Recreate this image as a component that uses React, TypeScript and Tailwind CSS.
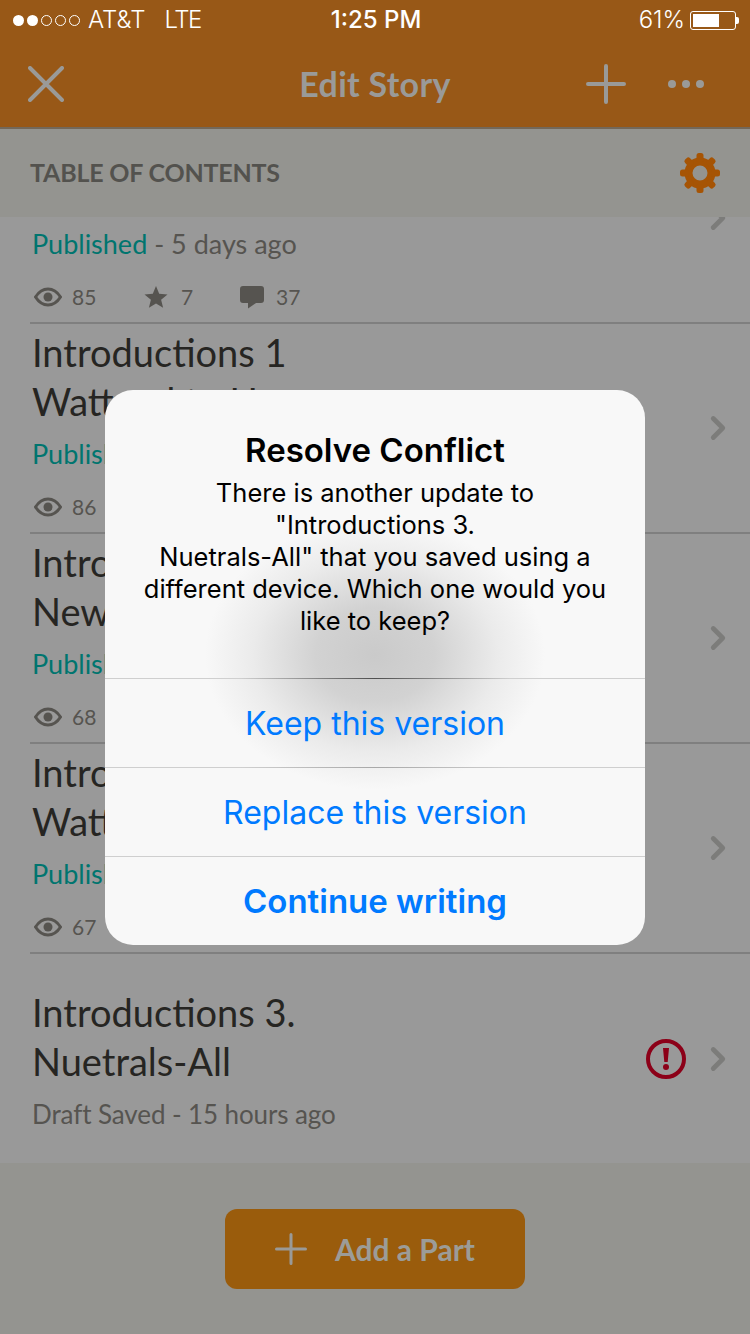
import { ChevronRight } from 'lucide-react';

const ios = { fontFamily: 'Inter, "Liberation Sans", sans-serif' };
const story = { fontFamily: 'Lato, "Noto Sans", sans-serif' };

const rows = [
  { title: ['', ''], views: 85, stars: 7, comments: 37 },
  { title: ['Introductions 1', 'Wattpad to Us'], views: 86, stars: 4, comments: 12 },
  { title: ['Introductions 2', 'New Version'], views: 68, stars: 3, comments: 9 },
  { title: ['Introductions 3', 'Wattpad Version'], views: 67, stars: 5, comments: 8 },
];

function Eye() {
  return (
    <svg width="28" height="20" viewBox="0 0 28 20">
      <path d="M1.5 10C5 4.5 9.2 2 14 2s9 2.5 12.5 8C23 15.500 18.800 18 14 18S5 15.500 1.500 10z" fill="none" stroke="#565450" strokeWidth="3" />
      <circle cx="14" cy="10" r="4.500" fill="#565450" />
    </svg>
  );
}

function Star() {
  return (
    <svg width="24" height="24" viewBox="0 0 24 24">
      <path d="M12 1l3.200 7.800 8.300.6-6.400 5.300 2 8.100L12 18.400 4.900 22.800l2-8.100L.5 9.400l8.300-.6z" fill="#565450" />
    </svg>
  );
}

function Bubble() {
  return (
    <svg width="24" height="24" viewBox="0 0 24 24">
      <path d="M3 1h18a3 3 0 0 1 3 3v11a3 3 0 0 1-3 3h-5l-8 5.500V18H3a3 3 0 0 1-3-3V4a3 3 0 0 1 3-3z" fill="#565450" />
    </svg>
  );
}

function Gear() {
  return (
    <svg width="40" height="40" viewBox="0 0 40 40">
      <circle cx="20" cy="20" r="11.500" fill="none" stroke="#a65404" strokeWidth="8" />
      {[0, 45, 90, 135, 180, 225, 270, 315].map((deg) => (
        <rect key={deg} x="16.500" y="0" width="7" height="9" rx="2.500" fill="#a65404" transform={`rotate(${deg} 20 20)`} />
      ))}
    </svg>
  );
}

function PlusIcon({ size, width }: { size: number; width: number }) {
  return (
    <svg width={size} height={size} viewBox={`0 0 ${size} ${size}`}>
      <path d={`M${size / 2} ${width / 2}V${size - width / 2}M${width / 2} ${size / 2}H${size - width / 2}`} stroke="#9a9a98" strokeWidth={width} strokeLinecap="round" />
    </svg>
  );
}

function Row({ row }: { row: (typeof rows)[number] }) {
  return (
    <div className="h-[210px] ml-[30px] border-b-2 border-[#7f7f7f] pl-[2px] pr-[20px] flex items-center justify-between">
      <div className="flex-1 pt-[4px]">
        <div className="h-[98px] text-[38px] leading-[49px] text-[#262522]">
          <div className="h-[49px]">{row.title[0]}</div>
          <div className="h-[49px]">{row.title[1]}</div>
        </div>
        <div className="mt-[3px] h-[50px] flex items-center text-[27px] text-[#565450]">
          <span className="text-[#00756f]">Published</span>
          <span>&nbsp;- 5 days ago</span>
        </div>
        <div className="ml-[2px] h-[53px] pt-[2px] flex items-center text-[21px] text-[#565450]">
          <div className="w-[110px] flex items-center gap-[10px]">
            <Eye />
            {row.views}
          </div>
          <div className="w-[96px] flex items-center gap-[13px]">
            <Star />
            {row.stars}
          </div>
          <div className="flex items-center gap-[12px]">
            <Bubble />
            {row.comments}
          </div>
        </div>
      </div>
      <ChevronRight size={38} strokeWidth={3} color="#7c7c7a" className="mr-[-7px]" />
    </div>
  );
}

export default function App() {
  return (
    <div className="relative w-[750px] h-[1334px] overflow-hidden bg-[#999999] flex flex-col" style={story}>
      <header className="relative z-10 h-[129px] shrink-0 bg-[#985817] border-b-2 border-[#73685a]">
        <div className="h-[40px] pl-[13px] pr-[11px] flex items-center justify-between text-white text-[24px]" style={ios}>
          <div className="w-[300px] flex items-center">
            <div className="flex gap-[3px]">
              <span className="w-[11px] h-[11px] rounded-full bg-white" />
              <span className="w-[11px] h-[11px] rounded-full bg-white" />
              <span className="w-[11px] h-[11px] rounded-full border border-white" />
              <span className="w-[11px] h-[11px] rounded-full border border-white" />
              <span className="w-[11px] h-[11px] rounded-full border border-white" />
            </div>
            <span className="ml-[8px] font-light">AT&amp;T</span>
            <span className="ml-[19px] font-light tracking-[-1.5px]">LTE</span>
          </div>
          <span className="font-medium">1:25 PM</span>
          <div className="w-[300px] flex items-center justify-end">
            <span className="font-light">61%</span>
            <div className="ml-[5px] w-[46px] h-[19px] rounded-[3px] border border-white p-[2px]">
              <div className="w-[26px] h-full bg-white" />
            </div>
            <div className="w-[3px] h-[7px] bg-white rounded-r-[2px]" />
          </div>
        </div>
        <div className="h-[88px] pl-[28px] pr-[46px] flex items-center justify-between">
          <svg width="36" height="36" viewBox="0 0 36 36">
            <path d="M2 2l32 32M34 2L2 34" stroke="#9a9a98" strokeWidth="4" strokeLinecap="round" />
          </svg>
          <div className="absolute left-0 right-0 pb-[2px] text-center text-[34px] tracking-[0.3px] font-bold text-[#9a9a98]">Edit Story</div>
          <div className="flex items-center gap-[42px]">
            <PlusIcon size={40} width={4} />
            <div className="flex gap-[6px]">
              <span className="w-[8px] h-[8px] rounded-full bg-[#9a9a98]" />
              <span className="w-[8px] h-[8px] rounded-full bg-[#9a9a98]" />
              <span className="w-[8px] h-[8px] rounded-full bg-[#9a9a98]" />
            </div>
          </div>
        </div>
      </header>

      <div className="relative z-10 h-[88px] shrink-0 bg-[#949490] pl-[30px] pr-[30px] flex items-center justify-between">
        <span className="text-[25px] tracking-[-0.2px] font-bold text-[#53524e]">TABLE OF CONTENTS</span>
        <Gear />
      </div>

      <div className="flex-1 overflow-hidden">
        <div className="mt-[-103px]">
          {rows.map((row) => (
            <Row key={row.views} row={row} />
          ))}
        </div>
        <div className="h-[210px] pl-[32px] pr-[20px] flex items-center justify-between">
          <div className="flex-1 pt-[9px]">
            <div className="text-[38px] leading-[49px] text-[#262522]">
              <div>Introductions 3.</div>
              <div>Nuetrals-All</div>
            </div>
            <div className="mt-[3px] h-[50px] flex items-center text-[26px] tracking-[-0.1px] text-[#565450]">Draft Saved - 15 hours ago</div>
          </div>
          <svg width="40" height="40" viewBox="0 0 40 40" className="mr-[13px]">
            <circle cx="20" cy="20" r="18" fill="none" stroke="#8c0018" strokeWidth="4" />
            <path d="M17 9h6l-1.300 14h-3.400z" fill="#8c0018" />
            <circle cx="20" cy="28" r="3" fill="#8c0018" />
          </svg>
          <ChevronRight size={38} strokeWidth={3} color="#7c7c7a" className="mr-[-7px]" />
        </div>
      </div>

      <div className="h-[171px] shrink-0 bg-[#949490] flex items-start justify-center pt-[46px]">
        <div className="w-[300px] h-[80px] rounded-[12px] bg-[#9a5c0c] flex items-center justify-center gap-[28px]">
          <PlusIcon size={32} width={3} />
          <span className="text-[30px] font-bold text-[#9c9c98]">Add a Part</span>
        </div>
      </div>

      <div className="absolute z-20 left-[105px] top-[390px] w-[540px] h-[555px] rounded-[28px] overflow-hidden bg-[#f8f8f8] flex flex-col" style={ios}>
        <div className="absolute left-[100px] top-[130px] w-[340px] h-[270px] bg-[radial-gradient(closest-side,#cacaca_0%,#d2d2d2_35%,#ebebeb_72%,#f8f8f8_100%)]" />
        <div className="relative h-[288px] pt-[38px] px-[30px] text-center text-black">
          <div className="text-[33px] leading-[44px] font-semibold">Resolve Conflict</div>
          <div className="mt-[5px] text-[25.500px] leading-[32px] whitespace-nowrap">
            There is another update to
            <br />
            "Introductions 3.
            <br />
            Nuetrals-All" that you saved using a
            <br />
            different device. Which one would you
            <br />
            like to keep?
          </div>
        </div>
        <div className="relative h-[89px] pt-[2px] flex items-center justify-center text-[32px] text-[#007aff]">
          <div className="absolute top-0 left-0 right-0 h-px bg-[linear-gradient(90deg,#cfcfcf_25%,#4f4f4f_50%,#cfcfcf_75%)]" />
          Keep this version
        </div>
        <div className="relative h-[89px] pt-[2px] flex items-center justify-center text-[32px] text-[#007aff]">
          <div className="absolute top-0 left-0 right-0 h-px bg-[linear-gradient(90deg,#cfcfcf_25%,#a8a8a8_50%,#cfcfcf_75%)]" />
          Replace this version
        </div>
        <div className="relative h-[89px] pt-[2px] border-t border-[#cfcfcf] flex items-center justify-center text-[33px] font-semibold text-[#007aff]">Continue writing</div>
      </div>
    </div>
  );
}
